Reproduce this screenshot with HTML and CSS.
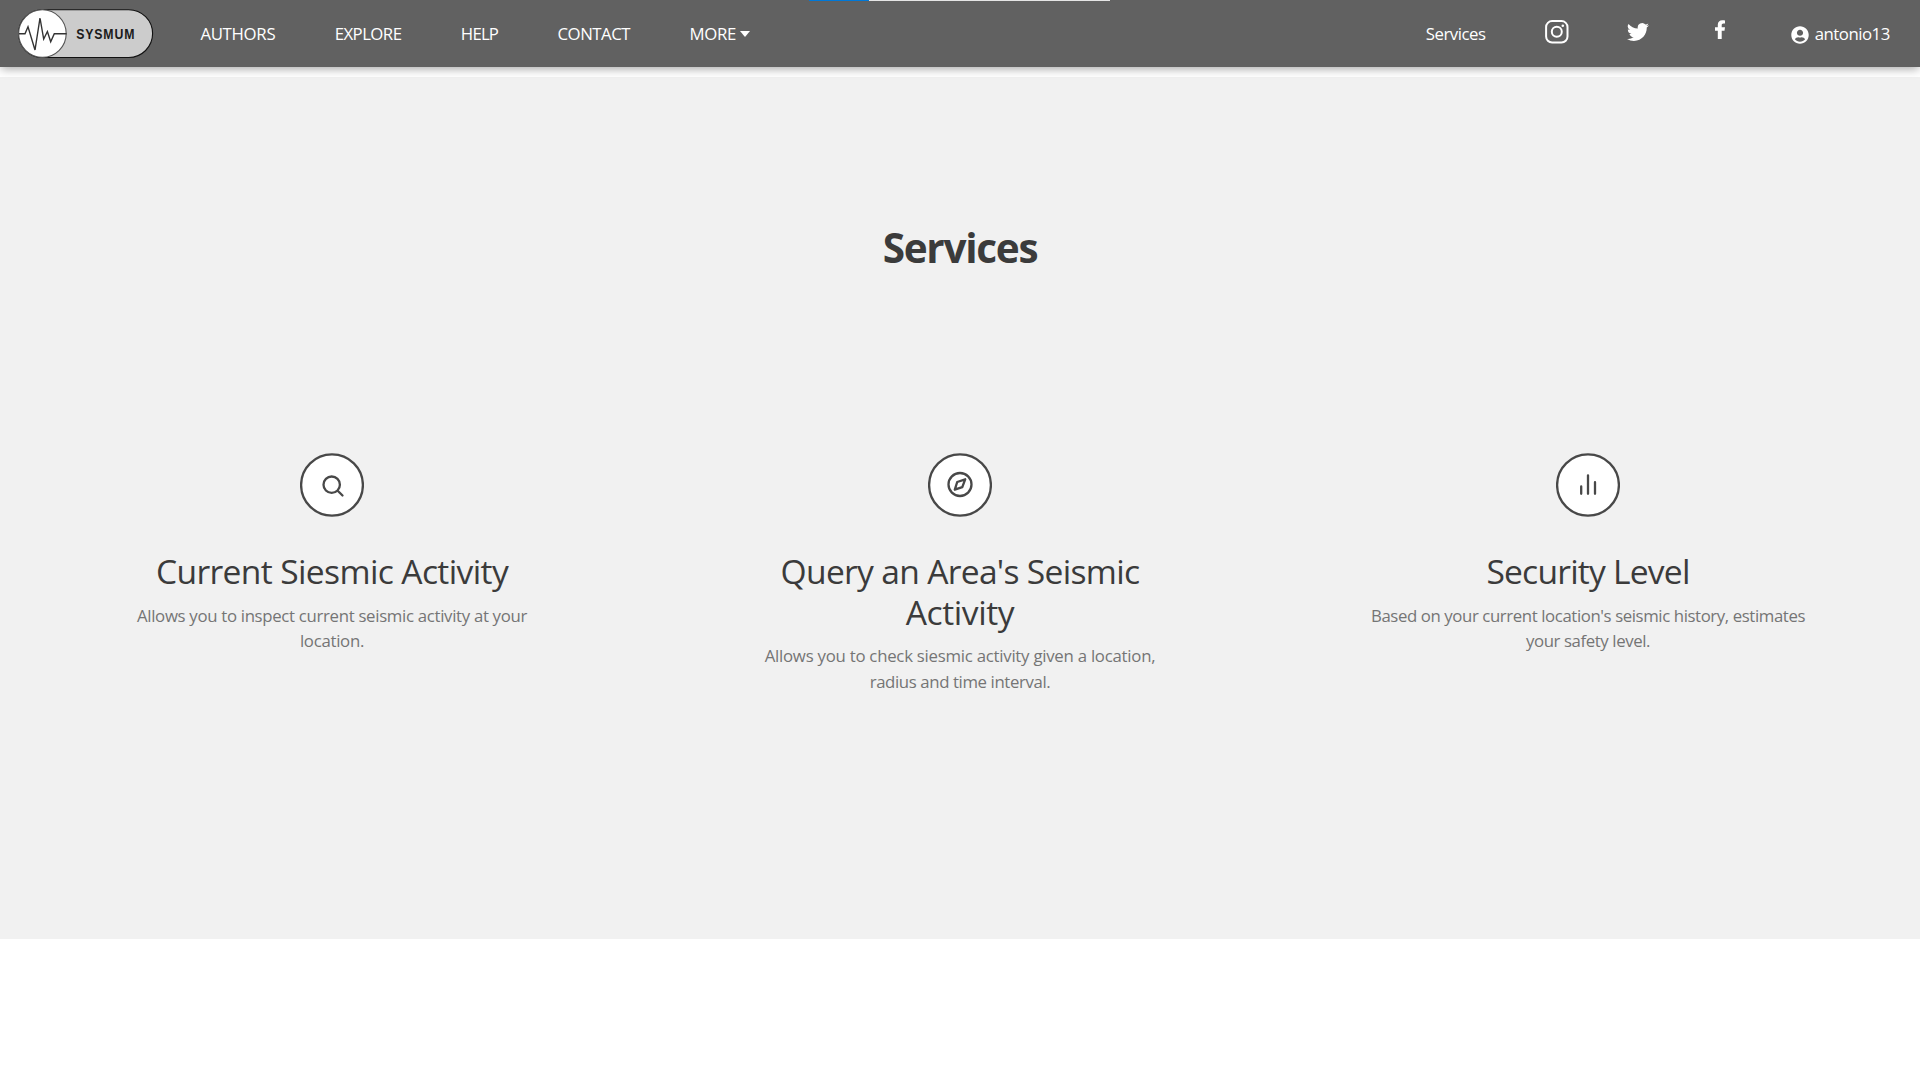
FILE: index.html
```html
<!DOCTYPE html>
<html lang="en">
<head>
<meta charset="utf-8">
<title>SYSMUM - Services</title>
<link rel="stylesheet" href="styles.css">
</head>
<body>
<header class="navbar">
  <div class="progress"><div class="progress-value"></div></div>
  <a class="brand" aria-label="Sysmum">
    <svg width="136" height="50" viewBox="0 0 136 50">
      <rect x="0.6" y="0.7" width="134" height="47.8" rx="23.9" fill="#ccc" stroke="#111" stroke-width="1.1"/>
      <circle cx="24.4" cy="24.6" r="23.8" fill="#fff" stroke="#555" stroke-width="1.1"/>
      <path d="M1 24.700H7L10 17.700L17 41L22 9L25.700 30L29.400 22.500L32.700 32.700L36.300 24.700H48.600" fill="none" stroke="#333" stroke-width="1.400"/>
      <text class="brand-text" x="71" y="30" textLength="71" transform="scale(.82 1)">SYSMUM</text>
    </svg>
  </a>
  <nav class="menu">
    <a class="authors">AUTHORS</a>
    <a class="explore">EXPLORE</a>
    <a class="help">HELP</a>
    <a class="contact">CONTACT</a>
    <a class="more">MORE<span class="caret"></span></a>
  </nav>
  <nav class="side">
    <a class="services-link">Services</a>
    <svg class="instagram" width="24" height="24" viewBox="0 0 24 24" fill="none" stroke="#fff">
      <rect x="1.1" y="1.1" width="21.4" height="21.4" rx="6" stroke-width="2"/>
      <circle cx="11.8" cy="11.8" r="5" stroke-width="2"/>
      <circle cx="17.8" cy="5.7" r="1.3" fill="#fff" stroke="none"/>
    </svg>
    <svg class="twitter" width="22" height="22" viewBox="0 0 24 24" fill="#fff"><path d="M23.95 4.57a10 10 0 0 1-2.82.77 4.96 4.96 0 0 0 2.16-2.72c-.95.56-2 .96-3.12 1.19a4.92 4.92 0 0 0-8.38 4.48C7.69 8.1 4.07 6.13 1.64 3.16a4.92 4.92 0 0 0 1.52 6.57 4.9 4.9 0 0 1-2.23-.61v.06a4.92 4.92 0 0 0 3.95 4.83 5 5 0 0 1-2.21.08 4.94 4.94 0 0 0 4.6 3.42A9.87 9.87 0 0 1 0 19.54a14 14 0 0 0 7.55 2.21c9.05 0 14-7.5 14-13.98 0-.21 0-.42-.02-.63a9.94 9.94 0 0 0 2.46-2.55z"/></svg>
    <svg class="facebook" width="11" height="20" viewBox="0 0 11 20" fill="#fff"><path d="M2.8 19V10.7H0V7.2h2.800V4.800C2.800 1.800 4.600.2 7.300.2c1.300 0 2.700.2 2.700.2v3H8.500c-1.300 0-1.800.8-1.800 1.700v2.100H10l-.5 3.500H6.700V19z"/></svg>
    <a class="user">
      <svg width="18" height="18" viewBox="0 0 496 512" fill="#fff"><path d="M248 8C111 8 0 119 0 256s111 248 248 248 248-111 248-248S385 8 248 8zm0 96c48.600 0 88 39.400 88 88s-39.400 88-88 88-88-39.400-88-88 39.400-88 88-88zm0 344c-58.700 0-111.300-26.600-146.500-68.200 18.800-35.400 55.600-59.800 98.500-59.800 2.400 0 4.800.4 7.100 1.100 13 4.200 26.600 6.900 40.900 6.900 14.300 0 28-2.700 40.900-6.900 2.300-.7 4.700-1.100 7.100-1.100 42.900 0 79.700 24.400 98.500 59.800C359.300 421.400 306.700 448 248 448z"/></svg>
      <span>antonio13</span>
    </a>
  </nav>
</header>
<main class="services">
  <h1>Services</h1>
  <div class="cards">
    <section class="card">
      <svg class="icon" viewBox="0 0 64 64">
        <ellipse class="disc" cx="32" cy="32" rx="30.900" ry="30.600"/>
        <circle cx="31.700" cy="31.700" r="8.200"/><path d="M37.700 37.700l4.800 4.800"/>
      </svg>
      <h2><span class="h-current">Current Siesmic Activity</span></h2>
      <p><span class="p-inspect">Allows you to inspect current seismic activity at your</span><br><span class="p-location">location.</span></p>
    </section>
    <section class="card">
      <svg class="icon" viewBox="0 0 64 64">
        <ellipse class="disc" cx="32" cy="32" rx="30.900" ry="30.600"/>
        <circle cx="32" cy="31.500" r="11.500"/><path d="M37.200 26.300L34.300 34.200L26.800 36.700L29.200 29z"/>
      </svg>
      <h2><span class="h-query">Query an Area's Seismic</span><br><span class="h-activity">Activity</span></h2>
      <p><span class="p-check">Allows you to check siesmic activity given a location,</span><br><span class="p-radius">radius and time interval.</span></p>
    </section>
    <section class="card">
      <svg class="icon" viewBox="0 0 64 64">
        <ellipse class="disc" cx="32" cy="32" rx="30.900" ry="30.600"/>
        <path d="M25.200 33.500v7.300M32 22.300v18.500M39 29.200v11.600"/>
      </svg>
      <h2><span class="h-security">Security Level</span></h2>
      <p><span class="p-based">Based on your current location's seismic history, estimates</span><br><span class="p-safety">your safety level.</span></p>
    </section>
  </div>
</main>
</body>
</html>
```
FILE: styles.css
```css
* { box-sizing: border-box; }

body {
  margin: 0;
  background: #fff;
  color: #3b3b3b;
  font: 16.8px/1.5 "Open Sans", "Noto Sans", sans-serif;
}

.navbar {
  position: relative;
  z-index: 1;
  display: flex;
  align-items: center;
  height: 67px;
  padding: 0 30.2px 0 18px;
  background: #616161;
  color: #fff;
  box-shadow: 0 3px 9px -1px rgba(0, 0, 0, .34);
}

.progress {
  position: absolute;
  top: 0;
  left: 809px;
  width: 301px;
  height: 1px;
  background: #e5e5e5;
}

.progress-value {
  width: 60px;
  height: 1px;
  background: #0078d7;
}

.brand { display: flex; }
.brand-text { font: bold 15px "Liberation Sans", Arial, sans-serif; fill: #1b1b1b; }

.menu {
  display: flex;
  gap: 59.4px;
  margin-left: 46.4px;
}

.authors { letter-spacing: -.312px; }
.explore { letter-spacing: -.547px; }
.help { letter-spacing: -.819px; }
.contact { letter-spacing: -.48px; }
.more { display: flex; align-items: center; letter-spacing: -.334px; }

.caret {
  margin-left: 4.5px;
  border: 5.3px solid transparent;
  border-top: 6px solid #fff;
  border-bottom: 0;
}

.side {
  display: flex;
  align-items: center;
  margin-left: auto;
}

.services-link { letter-spacing: -.5px; }
.instagram { margin: -4px 0 0 59.3px; }
.twitter { margin: -4px 0 0 58.5px; }
.facebook { margin: -7px 0 0 65.5px; }
.user { display: flex; align-items: center; margin-left: 65px; }
.user svg { margin: 3px 6px 0 0; }
.user span { letter-spacing: -.489px; }

.services {
  height: 862px;
  margin-top: 10px;
  padding: 147px 18px 0;
  background: #f1f1f1;
  text-align: center;
}

h1 {
  margin: 0;
  font-size: 40.5px;
  line-height: 48.6px;
  font-weight: 700;
  letter-spacing: -1.3px;
}

.cards {
  display: grid;
  grid-template-columns: repeat(3, 1fr);
  margin-top: 180px;
}

.card { display: flex; flex-direction: column; align-items: center; }

.icon {
  width: 64px;
  height: 64px;
  fill: none;
  stroke: #484848;
  stroke-width: 2.3;
  stroke-linecap: round;
  stroke-linejoin: round;
}

.disc { fill: #fff; }

h2 {
  margin: 34.4px 0 11px;
  font-size: 33.6px;
  line-height: 40.7px;
  font-weight: 400;
}

p { margin: 0; color: #757575; }

.h-current { letter-spacing: -.627px; }
.h-query { letter-spacing: -.69px; }
.h-activity { letter-spacing: -.426px; }
.h-security { letter-spacing: -.782px; }
.p-inspect { letter-spacing: -.312px; }
.p-location { letter-spacing: -.287px; }
.p-check { letter-spacing: -.248px; }
.p-radius { letter-spacing: -.389px; }
.p-based { letter-spacing: -.4px; }
.p-safety { letter-spacing: -.403px; }
```
